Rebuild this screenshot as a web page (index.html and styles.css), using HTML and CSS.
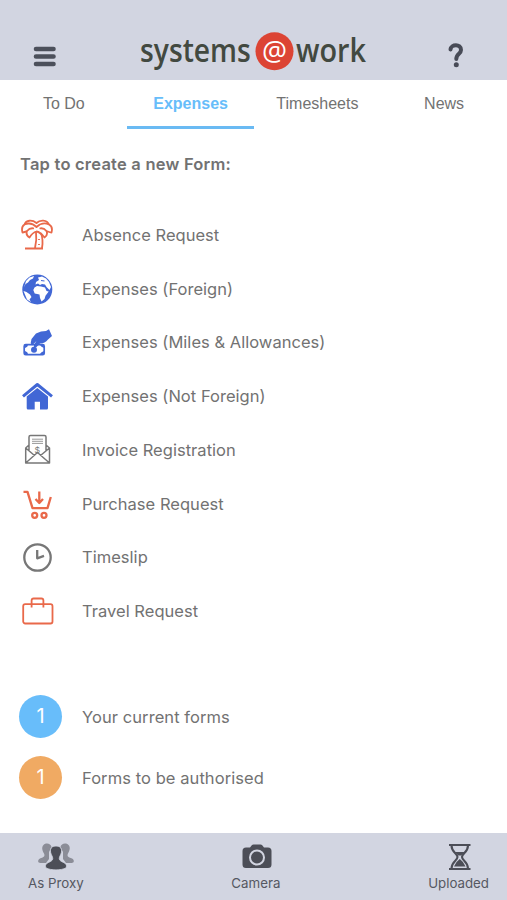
FILE: index.html
```html
<!DOCTYPE html>
<html lang="en">
  <head>
    <meta charset="utf-8">
    <title>systems@work</title>
    <link rel="stylesheet" href="styles.css">
  </head>
  <body>
    <header class="header">
      <svg class="menu-icon" viewBox="0 0 24 24">
        <path d="M3 5H20.500M3 12.500H20.500M3 20H20.500"></path>
      </svg>
      <svg class="logo" viewBox="0 0 230 50">
        <circle class="logo-dot" cx="136.500" cy="25.300" r="19"></circle>
        <g transform="translate(2 36) scale(.89 1)"><text class="logo-text" textLength="124.500" lengthAdjust="spacingAndGlyphs">systems</text></g>
        <text class="logo-at" x="124" y="34.500" textLength="25" lengthAdjust="spacingAndGlyphs">@</text>
        <g transform="translate(158 36) scale(.87 1)"><text class="logo-text" textLength="80.500" lengthAdjust="spacingAndGlyphs">work</text></g>
      </svg>
      <svg class="help-icon" viewBox="0 0 20 26">
        <path d="M4.500 7.500C5 2 15 1.500 15 8C15 12 10.300 11.500 10.300 17"></path>
        <circle cx="10.300" cy="22.800" r="2.500"></circle>
      </svg>
    </header>

    <nav class="tabs">
      <a class="tab">To Do</a>
      <a class="tab active">Expenses</a>
      <a class="tab">Timesheets</a>
      <a class="tab">News</a>
    </nav>

    <main class="content">
      <h1 class="title">Tap to create a new Form:</h1>

      <ul class="forms">
        <li class="form">
          <svg class="icon orange" viewBox="0 0 34 34">
            <path d="M16.500 5C12 1.500 6 2 4.500 6.500C1.500 8.500 1.500 11 2.500 14.500C4 14.500 5.500 13.500 7 13C6 15.500 7 18 9.500 19.500C11 17 12.500 14.500 16.500 13.500C20 14 22.500 17 24.500 19.500C27 18 27.500 15.500 26.500 13C28 13.500 29.500 14.500 31.500 14.500C32.500 11 32 8 29 6.500C27 1.500 20 1.500 16.500 5Z"></path>
            <path d="M4.500 6.500C9 4.500 13 5.500 16.500 9C20 5.500 25 4.500 29 6.500M7 13Q10 9.500 14 10.500M26.500 13Q23.500 9.500 19.500 10.500M16 13.500Q17 22 15 30M21 15Q23.500 22 22 30M5 30.500H23M19 21V22M19 26V27"></path>
          </svg>
          <span>Absence Request</span>
        </li>
        <li class="form">
          <svg class="icon" viewBox="0 0 34 34">
            <circle cx="17.300" cy="17.500" r="15" fill="#4167d5"></circle>
            <path fill="#fff" d="M13.300 18L14.500 15.500L17 14L21 14.500L25 15.500L26.500 19L28.700 19.500L25.500 23.700L24.500 27L21.500 29.500L20 26L19.500 22.500L14.700 21.500ZM15.500 12.500L16 10L19 8L18 5.500L22 4.500L26 6.500L29 10L31 15L29.500 18L26.500 15L25 12.500L22 12L20 13L18 11.500ZM6 9L9.500 5.500L14 4L13 6.500L10 8L8 10.500L5.500 12L4 15.500ZM3.500 19L6.500 20L10 22.500L11.500 25L9.500 27.500L11 30L7 27.500Z"></path>
            <path d="M21 8.500L24.500 9" fill="none" stroke="#4167d5" stroke-width="1.200"></path>
          </svg>
          <span>Expenses (Foreign)</span>
        </li>
        <li class="form">
          <svg class="icon" viewBox="0 0 34 34">
            <rect x="4.200" y="19.700" width="20" height="10" rx="1.500" fill="#fff" stroke="#4167d5" stroke-width="1.700"></rect>
            <path fill="#4167d5" d="M5 20H8Q8 22 5 23ZM20 20H24V23Q21 22 20 20ZM5 26Q8 27 8 29H5ZM24 26V29H20Q21 27 24 26Z"></path>
            <circle cx="14" cy="24.800" r="3" fill="#4167d5"></circle>
            <path d="M10.700 18L11.500 14L16 8.500L21 6.500L26 6L29 4.200L32 11L28 14.500Q25 18.500 20 18.500L16 22.500Q12.500 22.500 14.500 19L16.500 16L12 20.500Z" fill="#4167d5"></path>
          </svg>
          <span>Expenses (Miles &amp; Allowances)</span>
        </li>
        <li class="form">
          <svg class="icon" viewBox="0 0 34 34">
            <path d="M3 17.300L17.300 5.500L32 17.300" fill="none" stroke="#4167d5" stroke-width="3" stroke-linejoin="round"></path>
            <path d="M17.300 9L28 17.500V29Q28 30.500 26.700 30.500H20V22.800H14.700V30.500H8Q6.700 30.500 6.700 29V17.500Z" fill="#4167d5"></path>
          </svg>
          <span>Expenses (Not Foreign)</span>
        </li>
        <li class="form">
          <svg class="icon grey thin" viewBox="0 0 34 34">
            <path d="M9 18V4Q9 2.600 10.500 2.600H24.500Q26 2.600 26 4V18M9 12L5.700 15V30H29.500V15L26 12M5.700 15L14.500 22.500M29.500 15L20.500 22.500M5.700 30L17.500 19.500L29.500 30"></path>
            <path class="lines" d="M12 6.200H23M12 8.300H23M12 10.400H23"></path>
            <text x="14.800" y="20">$</text>
          </svg>
          <span>Invoice Registration</span>
        </li>
        <li class="form">
          <svg class="icon orange thick" viewBox="0 0 34 34">
            <path d="M3.500 4.800H7.500L12.500 21.200H27.500L30.800 10M19.300 4.500V15.500M15.500 12L19.300 16L23 12"></path>
            <circle cx="14.700" cy="28.300" r="2.500"></circle>
            <circle cx="24" cy="28.300" r="2.500"></circle>
          </svg>
          <span>Purchase Request</span>
        </li>
        <li class="form">
          <svg class="icon grey thick" viewBox="0 0 34 34">
            <circle cx="17.500" cy="17.500" r="13.200"></circle>
            <path d="M17.200 10V18.300L24 15.800"></path>
          </svg>
          <span>Timeslip</span>
        </li>
        <li class="form">
          <svg class="icon orange" viewBox="0 0 34 34">
            <rect x="3.200" y="10.200" width="29.300" height="19.300" rx="2"></rect>
            <path d="M11.600 13.500V6.500Q11.600 4.500 13.600 4.500H21.400Q23.400 4.500 23.400 6.500V13.500"></path>
          </svg>
          <span>Travel Request</span>
        </li>
      </ul>

      <ul class="counts">
        <li class="count"><span class="badge blue">1</span><span>Your current forms</span></li>
        <li class="count"><span class="badge amber">1</span><span>Forms to be authorised</span></li>
      </ul>
    </main>

    <footer class="footer">
      <a class="action">
        <svg class="action-icon" viewBox="0 0 40 30">
          <path fill="#8b8d97" d="M7.500 3C10 .5 15 1.500 15.500 5L13 10V17L10 21H4.500C1.500 21 1.500 18 4 16.500C7 15.500 9.500 14.500 8 11.500C6 8 5.500 5 7.500 3ZM32.500 3C30 .5 25 1.500 24.500 5L27 10V17L30 21H35.500C38.500 21 38.500 18 36 16.500C33 15.500 30.500 14.500 32 11.500C34 8 34.500 5 32.500 3Z"></path>
          <path fill="#4c4e57" stroke="#d2d5e1" stroke-width=".8" d="M20 4C13.500 4 13.500 9.500 16 14C18 18 15.500 19 12.500 20.500C9.500 22 9 23.500 10 26C15 28.500 25 28.500 30 26C31 23.500 30.500 22 27.500 20.500C24.500 19 22 18 24 14C26.500 9.500 26.500 4 20 4Z"></path>
        </svg>
        <span>As Proxy</span>
      </a>
      <a class="action">
        <svg class="action-icon" viewBox="0 0 40 30">
          <path fill="#4c4e57" d="M10 5.500H14L16 3Q16.500 2.500 17.500 2.500H24.500Q25.500 2.500 26 3L28 5.500H32Q35.500 5.500 35.500 9V22.500Q35.500 26 32 26H10Q6.500 26 6.500 22.500V9Q6.500 5.500 10 5.500Z"></path>
          <circle cx="21" cy="15.500" r="7" fill="none" stroke="#d2d5e1" stroke-width="2"></circle>
        </svg>
        <span>Camera</span>
      </a>
      <a class="action">
        <svg class="action-icon" viewBox="0 0 40 30">
          <path d="M10 3H31.500M10 27H31.500M12.500 3.500C12.500 10.500 18.500 11.500 18.500 15S12.500 19.500 12.500 26.500M29 3.500C29 10.500 23 11.500 23 15S29 19.500 29 26.500" fill="none" stroke="#4c4e57" stroke-width="2.100"></path>
          <path d="M15.500 10H26L22 13.500H19.500ZM20.800 17Q25 20 26.500 24.500H15Q16.500 20 20.800 17Z" fill="#4c4e57"></path>
        </svg>
        <span>Uploaded</span>
      </a>
    </footer>
  </body>
</html>
```

FILE: styles.css
```css
* {
  box-sizing: border-box;
}
body {
  display: flex;
  flex-direction: column;
  margin: 0;
  height: 900px;
  background: #fff;
  color: #727272;
  font-family: Inter, "Liberation Sans", sans-serif;
}
ul {
  margin: 0;
  padding: 0;
  list-style: none;
}
.header {
  display: flex;
  justify-content: space-between;
  height: 80px;
  padding: 26px 41px 0 33px;
  background: #d2d5e1;
}
.menu-icon {
  width: 24px;
  height: 24px;
  margin-top: 18px;
  fill: none;
  stroke: #4c505b;
  stroke-width: 4.600;
  stroke-linecap: round;
}
.logo {
  width: 230px;
  height: 50px;
  margin-left: 2px;
}
.logo-text {
  font: 600 33px "Open Sans", sans-serif;
  fill: #424940;
}
.logo-dot {
  fill: #dc4434;
}
.logo-at {
  font: 500 28px "Open Sans", sans-serif;
  fill: #fff;
}
.help-icon {
  width: 20px;
  height: 26px;
  margin-top: 16px;
  fill: none;
  stroke: #484b57;
  stroke-width: 4;
  stroke-linecap: round;
}
.help-icon circle {
  fill: #484b57;
  stroke: none;
}
.tabs {
  display: grid;
  grid-template-columns: repeat(4, 1fr);
  height: 49px;
}
.tab {
  padding-top: 2px;
  padding-left: 1px;
  text-align: center;
  font: 16px/44px "Liberation Sans", sans-serif;
}
.tab.active {
  border-bottom: 3px solid #6abaf3;
  color: #67bdfa;
  font-weight: bold;
}
.content {
  flex: 1;
  padding: 22px 19px 0;
}
.title {
  margin: 0 0 31px 1px;
  font-size: 16.500px;
  font-weight: 600;
  letter-spacing: .22px;
  line-height: 26px;
}
.form {
  display: flex;
  align-items: center;
  height: 53.750px;
  padding-left: 1px;
  font-size: 16.500px;
  letter-spacing: .03px;
}
.icon {
  width: 34px;
  height: 34px;
  margin-right: 28px;
}
.orange, .grey {
  fill: none;
  stroke: #e9694a;
  stroke-width: 1.800;
  stroke-linejoin: round;
}
.grey {
  stroke: #777;
}
.thick {
  stroke-width: 2.300;
}
.thin {
  stroke-width: 1.500;
}
.thin .lines {
  stroke: #999;
  stroke-width: 1;
}
.thin text {
  font: 9px "Liberation Sans", sans-serif;
  fill: #777;
  stroke: none;
}
.counts {
  padding-top: 48px;
}
.count {
  display: flex;
  align-items: center;
  height: 61px;
  font-size: 16.500px;
  letter-spacing: .07px;
}
.badge {
  width: 43px;
  height: 43px;
  margin-right: 20px;
  border-radius: 50%;
  color: #fff;
  text-align: center;
  font-size: 20px;
  line-height: 42px;
}
.blue {
  background: #68bdfa;
}
.amber {
  background: #f0aa63;
}
.footer {
  display: flex;
  justify-content: space-between;
  height: 67px;
  padding: 9px 18px 0 28px;
  background: #d2d5e1;
  color: #565862;
  font-size: 13.300px;
}
.action {
  display: flex;
  flex-direction: column;
  align-items: center;
}
.action-icon {
  width: 40px;
  height: 30px;
}
.action span {
  line-height: 23px;
}
```
